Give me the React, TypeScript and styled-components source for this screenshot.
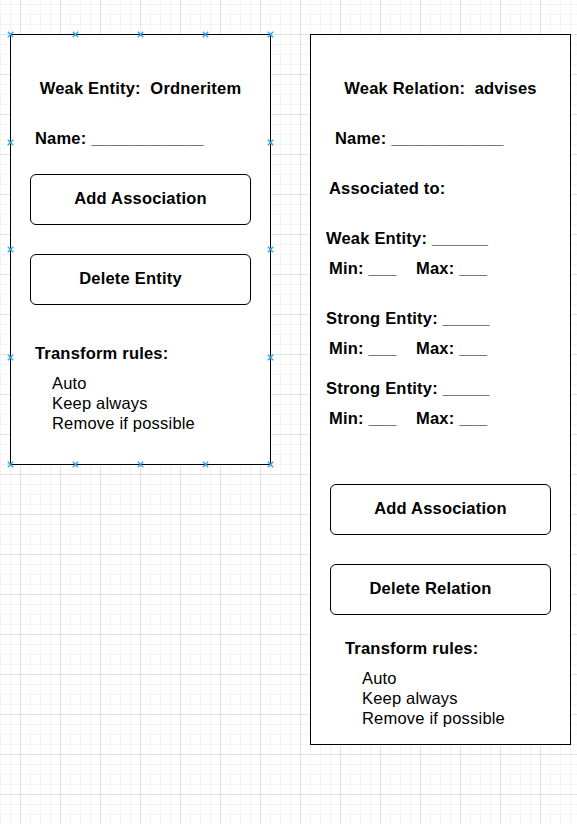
import React from "react";
import styled, { createGlobalStyle } from "styled-components";

const GlobalStyle = createGlobalStyle`
  html, body {
    margin: 0;
    padding: 0;
  }
  body {
    min-height: 824px;
    font-family: "Liberation Sans", Arial, Helvetica, sans-serif;
    color: #000;
    background-color: #ffffff;
    background-image:
      linear-gradient(to right, #e2e2e2 1px, transparent 1px),
      linear-gradient(to bottom, #e2e2e2 1px, transparent 1px),
      linear-gradient(to right, #f3f3f3 1px, transparent 1px),
      linear-gradient(to bottom, #f3f3f3 1px, transparent 1px);
    background-size: 40px 40px, 40px 40px, 10px 10px, 10px 10px;
    background-position: 20px 0, 0 34px, 0 0, 0 4px;
  }
`;

const Canvas = styled.div`
  display: flex;
  align-items: flex-start;
  gap: 39px;
  padding: 34px 0 0 10px;
`;

const Panel = styled.div<{ $h: number }>`
  position: relative;
  box-sizing: border-box;
  width: 261px;
  height: ${(p) => p.$h}px;
  border: 1px solid #000;
  background: #fff;
  display: flex;
  flex-direction: column;
  align-items: flex-start;
`;

const Title = styled.div`
  align-self: stretch;
  margin-top: 43px;
  text-align: center;
  font-size: 16.5px;
  line-height: 20px;
  font-weight: 700;
  letter-spacing: 0.2px;
  white-space: pre;
`;

const Label = styled.div<{ $top: number; $indent: number }>`
  margin-top: ${(p) => p.$top}px;
  padding-left: ${(p) => p.$indent}px;
  font-size: 16.5px;
  line-height: 20px;
  font-weight: 700;
  letter-spacing: 0.2px;
  white-space: pre;
`;

const LimitRow = styled.div<{ $top: number }>`
  display: flex;
  margin-top: ${(p) => p.$top}px;
  padding-left: 18px;
  font-size: 16.5px;
  line-height: 20px;
  font-weight: 700;
  letter-spacing: 0.2px;
  white-space: pre;
`;

const Limit = styled.span`
  width: 87px;
`;

const ActionButton = styled.div<{ $top: number; $shift: number }>`
  box-sizing: border-box;
  margin-top: ${(p) => p.$top}px;
  margin-left: 19px;
  width: 221px;
  height: 51px;
  border: 1px solid #000;
  border-radius: 6px;
  display: flex;
  align-items: center;
  justify-content: center;
  padding: 0 ${(p) => p.$shift}px 4px 0;
  font-size: 16.5px;
  line-height: 20px;
  font-weight: 700;
  letter-spacing: 0.2px;
  white-space: pre;
  cursor: pointer;
`;

const Options = styled.ul<{ $top: number; $indent: number }>`
  list-style: none;
  margin: ${(p) => p.$top}px 0 0 0;
  padding: 0 0 0 ${(p) => p.$indent}px;
  font-size: 16.5px;
  line-height: 20px;
  font-weight: 400;
  letter-spacing: 0.2px;
`;

const Option = styled.li`
  white-space: pre;
`;

const HandleMark = styled.svg<{ $x: number; $y: number }>`
  position: absolute;
  left: ${(p) => p.$x - 3}px;
  top: ${(p) => p.$y - 3}px;
  width: 7px;
  height: 7px;
  overflow: visible;
`;

function Handle({ x, y }: { x: number; y: number }) {
  return (
    <HandleMark $x={x} $y={y} viewBox="0 0 7 7">
      <path
        d="M1.3 1.3 L5.7 5.7 M5.7 1.3 L1.3 5.7"
        stroke="#2fa8e6"
        strokeWidth="1.4"
        strokeLinecap="square"
      />
    </HandleMark>
  );
}

const handleXs = [-1, 64, 129, 194, 259];
const handleYs = [-1, 106.5, 214, 321.5, 429];

function SelectionHandles() {
  const pts: { x: number; y: number }[] = [];
  handleXs.forEach((x) => {
    pts.push({ x, y: -1 });
    pts.push({ x, y: 429 });
  });
  handleYs.slice(1, -1).forEach((y) => {
    pts.push({ x: -1, y });
    pts.push({ x: 259, y });
  });
  return (
    <>
      {pts.map((p, i) => (
        <Handle key={i} x={p.x} y={p.y} />
      ))}
    </>
  );
}

const rules = ["Auto", "Keep always", "Remove if possible"];

function RuleList({ top, indent }: { top: number; indent: number }) {
  return (
    <Options $top={top} $indent={indent}>
      {rules.map((r) => (
        <Option key={r}>{r}</Option>
      ))}
    </Options>
  );
}

function MinMax({ top }: { top: number }) {
  return (
    <LimitRow $top={top}>
      <Limit>Min: ___</Limit>
      <span>Max: ___</span>
    </LimitRow>
  );
}

export default function App() {
  return (
    <>
      <GlobalStyle />
      <Canvas>
        <Panel $h={431}>
          <Title>{"Weak Entity:  Ordneritem"}</Title>
          <Label $top={30} $indent={24}>
            Name: ____________
          </Label>
          <ActionButton $top={26} $shift={0}>
            Add Association
          </ActionButton>
          <ActionButton $top={29} $shift={20}>
            Delete Entity
          </ActionButton>
          <Label $top={38} $indent={24}>
            Transform rules:
          </Label>
          <RuleList top={10} indent={41} />
          <SelectionHandles />
        </Panel>

        <Panel $h={711}>
          <Title>{"Weak Relation:  advises"}</Title>
          <Label $top={30} $indent={24}>
            Name: ____________
          </Label>
          <Label $top={30} $indent={18}>
            Associated to:
          </Label>
          <Label $top={30} $indent={15}>
            Weak Entity: ______
          </Label>
          <MinMax top={10} />
          <Label $top={30} $indent={15}>
            Strong Entity: _____
          </Label>
          <MinMax top={10} />
          <Label $top={20} $indent={15}>
            Strong Entity: _____
          </Label>
          <MinMax top={10} />
          <ActionButton $top={56} $shift={0}>
            Add Association
          </ActionButton>
          <ActionButton $top={29} $shift={20}>
            Delete Relation
          </ActionButton>
          <Label $top={23} $indent={34}>
            Transform rules:
          </Label>
          <RuleList top={10} indent={51} />
        </Panel>
      </Canvas>
    </>
  );
}
